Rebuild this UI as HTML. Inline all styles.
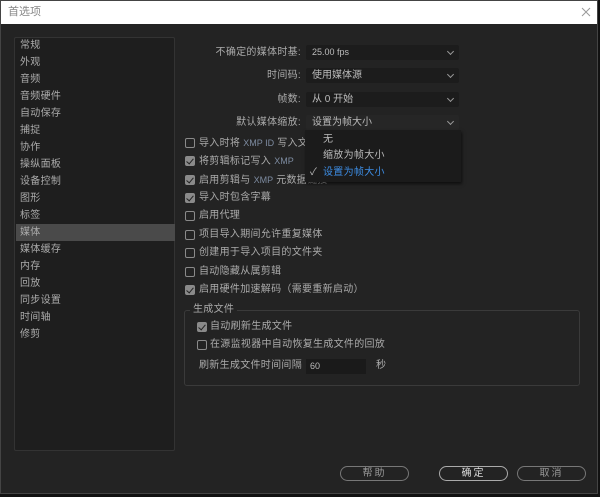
<!DOCTYPE html>
<html><head><meta charset="utf-8"><style>
*{margin:0;padding:0;box-sizing:border-box}
body{width:600px;height:497px;background:#111;position:relative;overflow:hidden;font-family:"Liberation Sans","Noto Sans CJK SC",sans-serif;font-size:10px;color:#ababab}
.a{position:absolute;white-space:nowrap}
#dlg{left:0;top:0;width:598px;height:494px;background:#232323;border:1px solid #444}
#title{left:1px;top:1px;width:596px;height:23px;background:#fff;color:#888;font-size:11px;line-height:23px;padding-left:7px}
#list{left:14px;top:37px;width:161px;height:414px;background:#1e1e1e;border:1px solid #333;border-radius:2px}
.li{position:absolute;left:5px;height:17px;line-height:17px;letter-spacing:.3px}
.sel{position:absolute;left:1px;width:159px;top:186px;height:17px;background:#4a4a4a}
.lab{position:absolute;right:299px;text-align:right;letter-spacing:.3px;line-height:15px}
.dd{position:absolute;left:306px;width:153px;height:15px;background:#1c1c1c;border-radius:2px;line-height:15px;padding-left:6px;color:#bbb}
.dd:after{content:"";position:absolute;right:6px;top:4px;width:4px;height:4px;border-right:1px solid #999;border-bottom:1px solid #999;transform:rotate(45deg)}
.cb{position:absolute;width:10px;height:10px;border:1px solid #8a8a8a;border-radius:2px}
.cb.on{background:#8a8a8a}
.cb.on:after{content:"";position:absolute;left:2px;top:0px;width:3px;height:6px;border-right:1.5px solid #222;border-bottom:1.5px solid #222;transform:rotate(40deg)}
.ct{position:absolute;line-height:14px;letter-spacing:.3px}
.x{color:#7d8ba0;font-size:9px;letter-spacing:0}
.btn{position:absolute;top:466px;width:69px;height:15px;border:1px solid #777;border-radius:8px;text-align:center;line-height:13px;color:#999;letter-spacing:2px}
</style></head><body>
<div class="a" id="dlg"></div>
<div class="a" id="title">首选项</div>
<svg class="a" style="left:580px;top:6px" width="12" height="12"><path d="M2 2L10 10M10 2L2 10" stroke="#999" stroke-width="1"/></svg>
<div class="a" id="list">
<div class="sel"></div>
<div class="li" style="top:-1px">常规</div><div class="li" style="top:16px">外观</div><div class="li" style="top:33px">音频</div><div class="li" style="top:50px">音频硬件</div><div class="li" style="top:67px">自动保存</div><div class="li" style="top:84px">捕捉</div><div class="li" style="top:101px">协作</div><div class="li" style="top:118px">操纵面板</div><div class="li" style="top:135px">设备控制</div><div class="li" style="top:152px">图形</div><div class="li" style="top:169px">标签</div><div class="li" style="top:186px">媒体</div><div class="li" style="top:203px">媒体缓存</div><div class="li" style="top:220px">内存</div><div class="li" style="top:237px">回放</div><div class="li" style="top:254px">同步设置</div><div class="li" style="top:271px">时间轴</div><div class="li" style="top:288px">修剪</div>
</div>
<div class="lab" style="top:45px">不确定的媒体时基:</div><div class="dd" style="top:45px"><span style="font-size:9px">25.00 fps</span></div>
<div class="lab" style="top:68px">时间码:</div><div class="dd" style="top:68px">使用媒体源</div>
<div class="lab" style="top:92px">帧数:</div><div class="dd" style="top:92px">从 0 开始</div>
<div class="lab" style="top:115px">默认媒体缩放:</div><div class="dd" style="top:115px;background:#262626">设置为帧大小</div>

<div class="cb" style="left:185px;top:138px"></div><div class="ct" style="left:199px;top:136px">导入时将 <span class="x">XMP ID</span> 写入文</div>
<div class="cb on" style="left:185px;top:156px"></div><div class="ct" style="left:199px;top:154px">将剪辑标记写入 <span class="x">XMP</span></div>
<div class="cb on" style="left:185px;top:175px"></div><div class="ct" style="left:199px;top:173px">启用剪辑与 <span class="x">XMP</span> 元数据链接</div>
<div class="cb on" style="left:185px;top:193px"></div><div class="ct" style="left:199px;top:191px">导入时包含字幕</div>
<div class="cb" style="left:185px;top:211px"></div><div class="ct" style="left:199px;top:209px">启用代理</div>
<div class="cb" style="left:185px;top:230px"></div><div class="ct" style="left:199px;top:228px">项目导入期间允许重复媒体</div>
<div class="cb" style="left:185px;top:248px"></div><div class="ct" style="left:199px;top:246px">创建用于导入项目的文件夹</div>
<div class="cb" style="left:185px;top:267px"></div><div class="ct" style="left:199px;top:265px">自动隐藏从属剪辑</div>
<div class="cb on" style="left:185px;top:285px"></div><div class="ct" style="left:199px;top:283px">启用硬件加速解码（需要重新启动）</div>

<div class="a" style="left:184px;top:310px;width:396px;height:76px;border:1px solid #3a3a3a;border-radius:3px"></div>
<div class="ct" style="left:190px;top:303px;background:#232323;padding:0 3px">生成文件</div>
<div class="cb on" style="left:197px;top:322px"></div><div class="ct" style="left:210px;top:320px">自动刷新生成文件</div>
<div class="cb" style="left:197px;top:340px"></div><div class="ct" style="left:210px;top:338px">在源监视器中自动恢复生成文件的回放</div>
<div class="ct" style="left:199px;top:359px">刷新生成文件时间间隔</div>
<div class="a" style="left:306px;top:359px;width:60px;height:15px;background:#1a1a1a;line-height:15px;padding-left:4px;font-size:9px;color:#bbb">60</div>
<div class="ct" style="left:376px;top:359px">秒</div>

<div class="a" style="left:305px;top:130px;width:156px;height:52px;background:#1b1b1b;box-shadow:1px 2px 3px rgba(0,0,0,.6)"></div>
<div class="ct" style="left:323px;top:133px;color:#bbb">无</div>
<div class="ct" style="left:323px;top:149px;color:#bbb">缩放为帧大小</div>
<div class="ct" style="left:310px;top:166px;color:#bbb">✓</div>
<div class="ct" style="left:323px;top:166px;color:#3d8ee6">设置为帧大小</div>

<div class="btn" style="left:340px">帮助</div>
<div class="btn" style="left:439px;border-color:#aaa;color:#ddd">确定</div>
<div class="btn" style="left:517px">取消</div>
</body></html>
